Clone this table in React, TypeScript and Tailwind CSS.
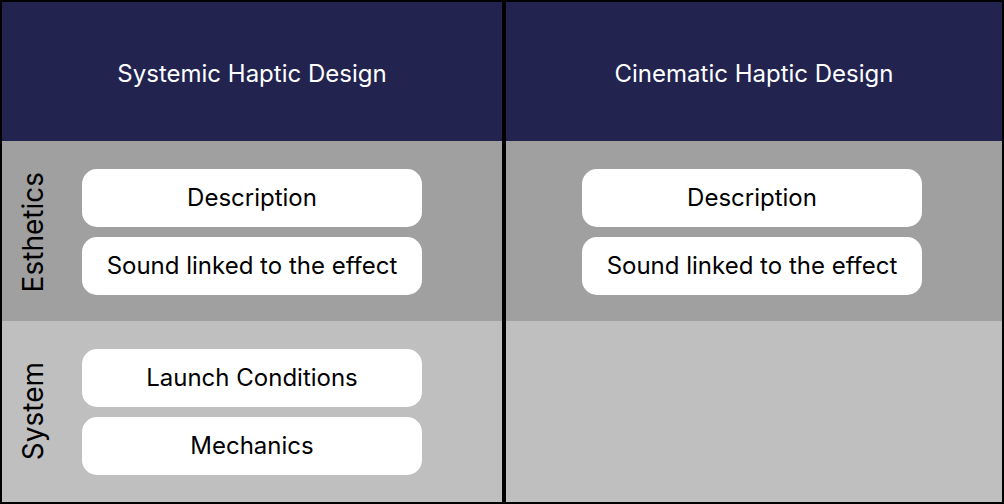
import React from 'react';

const font = { fontFamily: 'Inter, "Noto Sans", sans-serif' };

function Pill({ text }: { text: string }) {
  return (
    <div className="w-[340px] h-[58px] bg-white rounded-[15px] flex items-center justify-center text-[24px] text-black">
      {text}
    </div>
  );
}

function Label({ text }: { text: string }) {
  return (
    <div className="w-[62px] flex items-center justify-center">
      <span className="[writing-mode:vertical-rl] rotate-180 text-[28px] text-black leading-none">{text}</span>
    </div>
  );
}

export default function App() {
  return (
    <div style={font} className="w-[1004px] h-[504px] bg-black p-[2px]">
      <div className="grid grid-cols-[500px_496px] gap-x-[4px] grid-rows-[139px_180px_181px] h-full">
        <div className="bg-[#22234f] flex items-center justify-center pt-[4px] text-white text-[24px]">Systemic Haptic Design</div>
        <div className="bg-[#22234f] flex items-center justify-center pt-[4px] text-white text-[24px]">Cinematic Haptic Design</div>

        <div className="bg-[#a0a0a0] flex items-center pt-[2px]">
          <Label text="Esthetics" />
          <div className="ml-[18px] flex flex-col gap-[10px]">
            <Pill text="Description" />
            <Pill text="Sound linked to the effect" />
          </div>
        </div>
        <div className="bg-[#a0a0a0] flex items-center pt-[2px] pl-[76px]">
          <div className="flex flex-col gap-[10px]">
            <Pill text="Description" />
            <Pill text="Sound linked to the effect" />
          </div>
        </div>

        <div className="bg-[#bfbfbf] flex items-center">
          <Label text="System" />
          <div className="ml-[18px] flex flex-col gap-[10px]">
            <Pill text="Launch Conditions" />
            <Pill text="Mechanics" />
          </div>
        </div>
        <div className="bg-[#bfbfbf]" />
      </div>
    </div>
  );
}
